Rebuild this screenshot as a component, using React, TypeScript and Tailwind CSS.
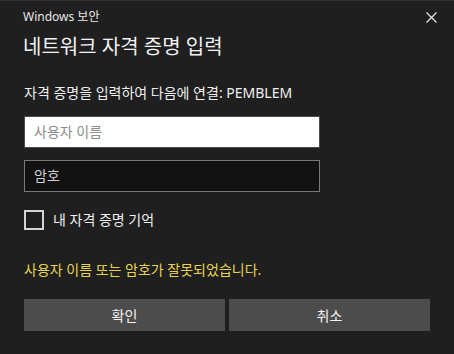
import React from "react";

const font = { fontFamily: '"Noto Sans", "Noto Sans CJK KR", sans-serif' };

export default function App() {
  return (
    <div
      className="w-[454px] h-[354px] bg-[#1f1f1f] border-t border-[#2e2e2e] text-white flex flex-col px-[24px] overflow-hidden"
      style={font}
    >
      <div className="flex items-center justify-between h-[30px] pt-[2px]">
        <span className="text-[12px] leading-[16px] text-[#e6e6e6] -ml-[1px]">Windows 보안</span>
        <svg width="11" height="11" viewBox="0 0 11 11" className="mr-[-7px]">
          <path d="M0.5 0.5 L10.5 10.5 M10.5 0.5 L0.5 10.5" stroke="#e8e8e8" strokeWidth="1.2" />
        </svg>
      </div>
      <div className="text-[20px] leading-[28px] mt-[2px] -ml-[1px] text-[#f2f2f2]">네트워크 자격 증명 입력</div>
      <div className="text-[14px] leading-[20px] mt-[22px] text-[#f0f0f0]">
        자격 증명을 입력하여 다음에 연결: PEMBLEM
      </div>
      <div className="mt-[13px] w-[296px] h-[32px] bg-white border border-[#4a4a4a] flex items-center px-[9px]">
        <span className="text-[14px] leading-[20px] text-[#8c8c8c]">사용자 이름</span>
      </div>
      <div className="mt-[12px] w-[296px] h-[32px] bg-[#121212] border border-[#7a7a7a] flex items-center px-[9px]">
        <span className="text-[14px] leading-[20px] text-[#cfcfcf]">암호</span>
      </div>
      <div className="mt-[18px] flex items-center gap-[9px]">
        <div className="w-[20px] h-[20px] border-2 border-[#d4d4d4]" />
        <span className="text-[14px] leading-[20px] text-[#f0f0f0]">내 자격 증명 기억</span>
      </div>
      <div className="mt-[30px] text-[14px] leading-[20px] text-[#e8d44d]">
        사용자 이름 또는 암호가 잘못되었습니다.
      </div>
      <div className="mt-[19px] flex gap-[4px]">
        <div className="flex-1 h-[32px] bg-[#4c4c4c] flex items-center justify-center text-[14px] text-[#f4f4f4]">
          확인
        </div>
        <div className="flex-1 h-[32px] bg-[#4c4c4c] flex items-center justify-center text-[14px] text-[#f4f4f4]">
          취소
        </div>
      </div>
    </div>
  );
}
